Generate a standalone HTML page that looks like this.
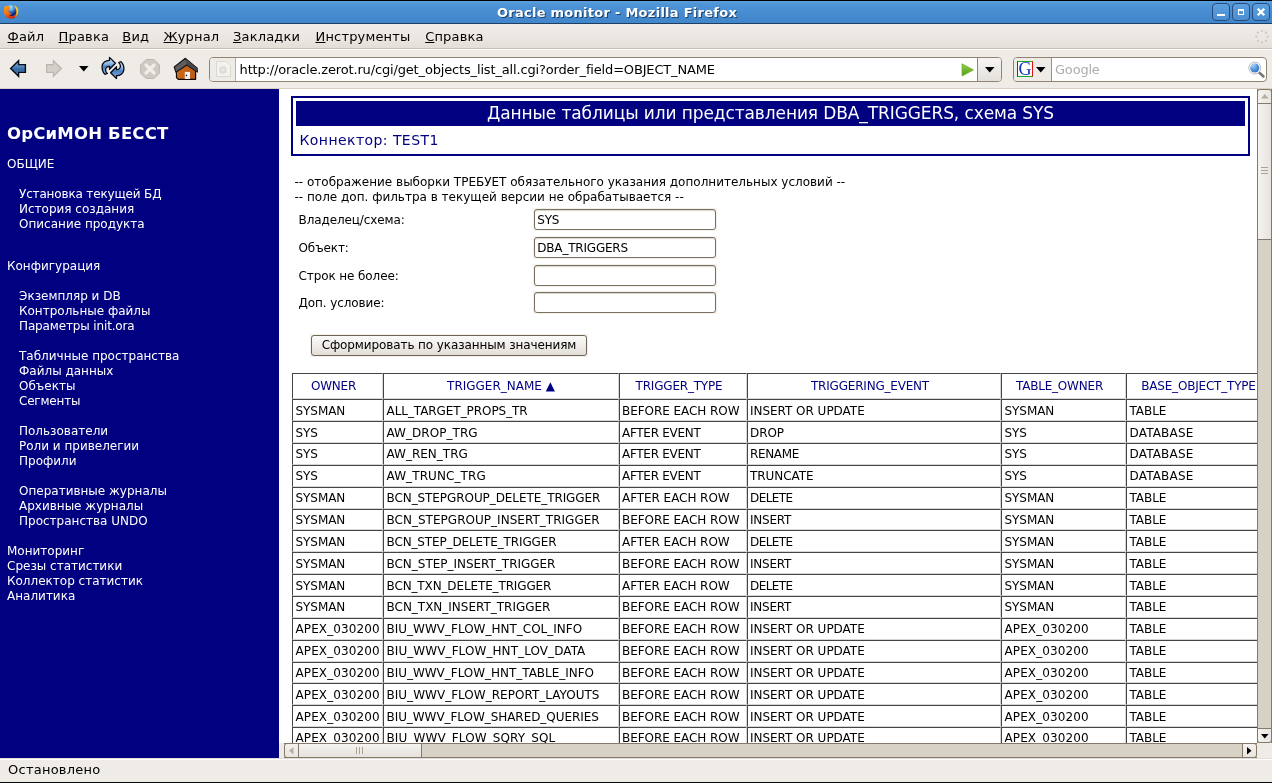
<!DOCTYPE html>
<html lang="ru"><head><meta charset="utf-8"><title>Oracle monitor - Mozilla Firefox</title>
<style>
*{margin:0;padding:0;box-sizing:border-box}
html,body{width:1272px;height:783px;overflow:hidden;background:#efebe7}
body{position:relative;font-family:"DejaVu Sans","Liberation Sans",sans-serif;font-size:12px;color:#000;line-height:15px}
#bg,#tx{position:absolute;left:0;top:0;width:1272px;height:783px;overflow:hidden}
#tx{will-change:transform}
.a{position:absolute;white-space:nowrap}
.m{font-size:13px;line-height:17px}
.mu::first-letter{text-decoration:underline;text-underline-offset:1px}
.w{color:#fff}
.n{color:#000080}
.c{text-align:center}
.clip{position:absolute;left:279px;top:89px;width:978px;height:654px;overflow:hidden}
.clip .a{margin-left:-279px;margin-top:-89px}
</style></head>
<body>
<div id="bg">
<div class="a" style="left:0px;top:0px;width:1272px;height:24px;background:linear-gradient(#5c9fde 0,#4f94d6 15%,#468bcf 60%,#4186cb 100%);border-top:1px solid #000;border-bottom:1px solid #1f3e63"></div>
<svg class="a" style="left:0;top:0" width="24" height="24" viewBox="0 0 24 24">
<defs><radialGradient id="fg" cx="42%" cy="25%" r="75%"><stop offset="0" stop-color="#b5e4fa"/><stop offset=".35" stop-color="#5aa6e6"/><stop offset=".7" stop-color="#1a3f9c"/><stop offset="1" stop-color="#071a5c"/></radialGradient>
<linearGradient id="fx" x1="0.2" y1="0" x2="0.6" y2="1"><stop offset="0" stop-color="#f79a1c"/><stop offset=".55" stop-color="#ee6f10"/><stop offset="1" stop-color="#d6190a"/></linearGradient>
<linearGradient id="fy" x1="0" y1="0" x2="0" y2="1"><stop offset="0" stop-color="#fbd015"/><stop offset=".6" stop-color="#fdc70f"/><stop offset="1" stop-color="#f08a12"/></linearGradient></defs>
<circle cx="11.300" cy="10.300" r="5.900" fill="url(#fg)"/>
<path d="M4.600 6.300C6 5.800 8 5.500 9.600 6.600L10.300 8.500C9 9.500 8.200 10.500 8.600 11.800 9.500 13.500 11 13.600 12 13 11.500 14.800 9.800 15.300 8.800 14.800 10.500 16.800 13.500 16.600 15.200 15 16.800 13.500 17.200 11 16.600 9 17.800 10.500 18.600 13 17.200 15.400 15.500 18.300 11.500 19.400 8.300 18 4.800 16.400 3.200 12.500 3.900 9 4 8 4.200 7 4.600 6.300Z" fill="url(#fx)"/>
<path d="M13.600 5.400C16 5.200 18 7.500 18.300 10 18.600 13 17.600 16 14.800 17.400 16.600 15.200 16.900 12 16 9.500 15.500 8 14.600 6.400 13.600 5.400Z" fill="url(#fy)"/>
</svg>
<div class="a" style="left:1212px;top:3px;width:18px;height:18px;border:1px solid #274b7a;border-radius:4px;background:linear-gradient(#5ea1e1,#4a8dd1)"><div class="a" style="left:4px;top:10px;width:8px;height:2px;background:#fff"></div></div>
<div class="a" style="left:1232px;top:3px;width:18px;height:18px;border:1px solid #274b7a;border-radius:4px;background:linear-gradient(#5ea1e1,#4a8dd1)"><div class="a" style="left:5px;top:5px;width:6px;height:6px;border:1px solid #fff;border-top-width:2px"></div></div>
<div class="a" style="left:1252px;top:3px;width:18px;height:18px;border:1px solid #274b7a;border-radius:4px;background:linear-gradient(#5ea1e1,#4a8dd1)"><svg class="a" style="left:3px;top:3px" width="10" height="10" viewBox="0 0 10 10"><path d="M1.700 1.700L8.300 8.300M8.300 1.700L1.700 8.300" stroke="#fff" stroke-width="2.300"/></svg></div>
<div class="a" style="left:0px;top:24px;width:1272px;height:26px;background:linear-gradient(#efebe7,#ebe6e1 60%,#e2ddd6);border-bottom:1px solid #fff"></div>
<div class="a" style="left:0px;top:48px;width:1272px;height:1px;background:#c9c1b6"></div>
<svg class="a" style="left:1253px;top:28px" width="18" height="18" viewBox="0 0 18 18"><circle cx="14.70" cy="8.70" r="1.100" fill="#cbc6bf"/><circle cx="13.03" cy="12.73" r="1.100" fill="#cbc6bf"/><circle cx="9.00" cy="14.40" r="1.100" fill="#cbc6bf"/><circle cx="4.97" cy="12.73" r="1.100" fill="#cbc6bf"/><circle cx="3.30" cy="8.70" r="1.100" fill="#cbc6bf"/><circle cx="4.97" cy="4.67" r="1.100" fill="#cbc6bf"/><circle cx="9.00" cy="3.00" r="1.100" fill="#cbc6bf"/><circle cx="13.03" cy="4.67" r="1.100" fill="#cbc6bf"/></svg>
<div class="a" style="left:0px;top:50px;width:1272px;height:39px;background:#efebe7;border-bottom:1px solid #d8cfc2"></div>
<svg class="a" style="left:0;top:50px" width="70" height="38" viewBox="0 50 70 38">
<defs><linearGradient id="ba" x1="0" y1="0" x2="0" y2="1"><stop offset="0" stop-color="#9dbde0"/><stop offset=".42" stop-color="#4d80b8"/><stop offset=".55" stop-color="#3567a0"/><stop offset="1" stop-color="#5f8fc4"/></linearGradient></defs>
<path d="M10.600 68.500L18.600 60.700V64.600H25.400V72.400H18.600V76.300Z" fill="url(#ba)" stroke="#070d18" stroke-width="1.400"/>
<path d="M61.400 68.500L53.400 60.700V64.600H46.600V72.400H53.400V76.300Z" fill="#d3d0cb" stroke="#b9b5af" stroke-width="1.200"/>
</svg>
<svg class="a" style="left:79px;top:66px" width="10" height="6" viewBox="0 0 10 6"><path d="M0 0H9.500L4.750 5.500Z" fill="#000"/></svg>
<svg class="a" style="left:98px;top:54px" width="32" height="28" viewBox="0 0 32 28">
<defs><linearGradient id="rl" x1="0" y1="0" x2="0" y2="1"><stop offset="0" stop-color="#e4eefa"/><stop offset=".4" stop-color="#86b1e2"/><stop offset=".55" stop-color="#4a80c0"/><stop offset="1" stop-color="#8cb6e3"/></linearGradient><linearGradient id="rl2" x1="0" y1="1" x2="0" y2="0"><stop offset="0" stop-color="#e4eefa"/><stop offset=".4" stop-color="#86b1e2"/><stop offset=".55" stop-color="#4a80c0"/><stop offset="1" stop-color="#8cb6e3"/></linearGradient></defs>
<path d="M11.500 3.400L17.400 9.300 11.500 15.300V12.300C9 12.300 7.500 14 7.600 16 7.700 17.500 8.500 18.800 9.300 19.500L7 20.300C5 18.500 4 15.500 4.100 12.500 4.200 9 7.500 6.300 11.500 6.300Z" fill="url(#rl)" stroke="#050a14" stroke-width="1.300" stroke-linejoin="round"/>
<path d="M11.500 3.400L17.400 9.300 11.500 15.300V12.300C9 12.300 7.500 14 7.600 16 7.700 17.500 8.500 18.800 9.300 19.500L7 20.300C5 18.500 4 15.500 4.100 12.500 4.200 9 7.500 6.300 11.500 6.300Z" fill="url(#rl2)" stroke="#050a14" stroke-width="1.300" stroke-linejoin="round" transform="rotate(180 15 14)"/>
</svg>
<svg class="a" style="left:139px;top:58px" width="22" height="22" viewBox="0 0 22 22">
<path d="M7 1.500H15L20.500 7V15L15 20.500H7L1.500 15V7Z" fill="#cdc9c3" stroke="#bdb8b1" stroke-width="1"/>
<path d="M7 7L15 15M15 7L7 15" stroke="#f1eeea" stroke-width="3.200" stroke-linecap="round"/></svg>
<svg class="a" style="left:170px;top:54px" width="32" height="28" viewBox="0 0 32 28">
<defs><linearGradient id="hw" x1="0" y1="0" x2="1" y2="0"><stop offset="0" stop-color="#f28c1e"/><stop offset=".12" stop-color="#c9661a"/><stop offset="1" stop-color="#b85c18"/></linearGradient></defs>
<path d="M6.500 15L16.500 9.500 25.600 15.500V25.300H8.300L6.500 23.500Z" fill="url(#hw)" stroke="#0a0502" stroke-width="1.200" stroke-linejoin="round"/>
<path d="M15.400 4.300L27.200 14.200 27.400 18 16.800 11 5.900 18.200 4.200 13Z" fill="#5e5e5e" stroke="#141414" stroke-width="1.100" stroke-linejoin="round"/>
<path d="M15.400 4.800L26.800 14.400 27 17.300 16.800 10.500Z" fill="#474747"/>
<rect x="14.800" y="17.900" width="5.200" height="7" fill="#f3f3f6"/><rect x="15.800" y="20.700" width="1.300" height="1.500" fill="#111"/>
</svg>
<div class="a" style="left:209px;top:57px;width:793px;height:25px;background:#fff;border:1px solid #8f8371;border-radius:4px;overflow:hidden"><div class="a" style="left:0;top:0;width:26px;height:23px;background:#efebe7;border-right:1px solid #b9b0a2"></div><svg class="a" style="left:6px;top:3px" width="15" height="17" viewBox="0 0 15 17"><path d="M.500 .500H10.500L14.500 4.500V15.500H.500Z" fill="#f4f2ef" stroke="#dcd8d2"/><circle cx="7" cy="9" r="3.800" fill="#dedbd6"/><circle cx="7" cy="9" r="1.800" fill="#ebe8e4"/></svg><svg class="a" style="left:751px;top:5px" width="14" height="15" viewBox="0 0 14 15"><defs><linearGradient id="go" x1="0" y1="0" x2="0" y2="1"><stop offset="0" stop-color="#9ad24a"/><stop offset="1" stop-color="#4f9a12"/></linearGradient></defs><path d="M1 .800L12.500 6.900 1 13Z" fill="url(#go)" stroke="#6fb52b" stroke-width=".8" stroke-linejoin="round"/></svg><div class="a" style="left:767px;top:0;width:25px;height:23px;background:linear-gradient(#f7f5f3,#e4e0da);border-left:1px solid #8f8371"></div><svg class="a" style="left:775px;top:9px" width="10" height="6" viewBox="0 0 10 6"><path d="M0 0H9.500L4.750 5.500Z" fill="#000"/></svg></div>
<div class="a" style="left:1013px;top:57px;width:254px;height:25px;background:#fff;border:1px solid #8f8371;border-radius:4px;overflow:hidden"><div class="a" style="left:0;top:0;width:38px;height:23px;background:#efebe7;border-right:1px solid #9c907f"></div><div class="a" style="left:3px;top:3px;width:16px;height:16px;background:#fff;border:1px solid;border-color:#1fa81f #d11 #1fa81f #1238d6"></div><svg class="a" style="left:22px;top:9px" width="10" height="6" viewBox="0 0 10 6"><path d="M0 0H9.500L4.750 5.500Z" fill="#000"/></svg><svg class="a" style="left:233px;top:1.500px" width="20" height="20" viewBox="0 0 20 20"><defs><radialGradient id="ln" cx="35%" cy="30%" r="75%"><stop offset="0" stop-color="#9dc8f2"/><stop offset=".6" stop-color="#4d8fd6"/><stop offset="1" stop-color="#3576c4"/></radialGradient></defs><line x1="11" y1="11.500" x2="16.500" y2="16.500" stroke="#777" stroke-width="2.600" stroke-linecap="round"/><circle cx="7.800" cy="8" r="6" fill="#fff" stroke="#aaa" stroke-width=".8"/><circle cx="7.800" cy="8" r="4.600" fill="url(#ln)"/><path d="M4.500 7A3.500 3.500 0 0 1 9 4.200" stroke="#a9cdf2" stroke-width="1.200" fill="none"/></svg></div>
<div class="a" style="left:0px;top:89px;width:279px;height:669px;background:#000080"></div>
<div class="a" style="left:279px;top:89px;width:978px;height:654px;background:#fff"></div>
<div class="a" style="left:291px;top:96px;width:959px;height:60px;border:2px solid #000080"></div>
<div class="a" style="left:296px;top:101px;width:949px;height:25px;background:#000080"></div>
<div class="a" style="left:533px;top:208px;width:184px;height:23px;background:#f3f1ee"></div>
<div class="a" style="left:534px;top:209px;width:182px;height:21px;border:1px solid #7c715f;border-radius:3px;background:#fff;box-shadow:inset 0 1px 1px #d9d5cf"></div>
<div class="a" style="left:533px;top:236px;width:184px;height:23px;background:#f3f1ee"></div>
<div class="a" style="left:534px;top:237px;width:182px;height:21px;border:1px solid #7c715f;border-radius:3px;background:#fff;box-shadow:inset 0 1px 1px #d9d5cf"></div>
<div class="a" style="left:533px;top:264px;width:184px;height:23px;background:#f3f1ee"></div>
<div class="a" style="left:534px;top:265px;width:182px;height:21px;border:1px solid #7c715f;border-radius:3px;background:#fff;box-shadow:inset 0 1px 1px #d9d5cf"></div>
<div class="a" style="left:533px;top:291px;width:184px;height:23px;background:#f3f1ee"></div>
<div class="a" style="left:534px;top:292px;width:182px;height:21px;border:1px solid #7c715f;border-radius:3px;background:#fff;box-shadow:inset 0 1px 1px #d9d5cf"></div>
<div class="a" style="left:310px;top:334px;width:278px;height:23px;background:#f3f1ee"></div>
<div class="a" style="left:311px;top:335px;width:276px;height:21px;border:1px solid #6f6555;border-radius:3px;background:linear-gradient(#fbfaf9,#efebe7 55%,#e2ddd6)"></div>
<div class="a" style="left:279px;top:89px;width:978px;height:654px;overflow:hidden"><div class="a" style="left:13px;top:284px;width:91px;height:26px;border:1px solid;border-color:#444 #d6d6d6 #d6d6d6 #444"></div><div class="a" style="left:104px;top:284px;width:236px;height:26px;border:1px solid;border-color:#444 #d6d6d6 #d6d6d6 #444"></div><div class="a" style="left:340px;top:284px;width:128px;height:26px;border:1px solid;border-color:#444 #d6d6d6 #d6d6d6 #444"></div><div class="a" style="left:468px;top:284px;width:254px;height:26px;border:1px solid;border-color:#444 #d6d6d6 #d6d6d6 #444"></div><div class="a" style="left:722px;top:284px;width:125px;height:26px;border:1px solid;border-color:#444 #d6d6d6 #d6d6d6 #444"></div><div class="a" style="left:847px;top:284px;width:153px;height:26px;border:1px solid;border-color:#444 #d6d6d6 #d6d6d6 #444"></div><div class="a" style="left:13px;top:310px;width:91px;height:22px;border:1px solid;border-color:#444 #d6d6d6 #d6d6d6 #444"></div><div class="a" style="left:104px;top:310px;width:236px;height:22px;border:1px solid;border-color:#444 #d6d6d6 #d6d6d6 #444"></div><div class="a" style="left:340px;top:310px;width:128px;height:22px;border:1px solid;border-color:#444 #d6d6d6 #d6d6d6 #444"></div><div class="a" style="left:468px;top:310px;width:254px;height:22px;border:1px solid;border-color:#444 #d6d6d6 #d6d6d6 #444"></div><div class="a" style="left:722px;top:310px;width:125px;height:22px;border:1px solid;border-color:#444 #d6d6d6 #d6d6d6 #444"></div><div class="a" style="left:847px;top:310px;width:153px;height:22px;border:1px solid;border-color:#444 #d6d6d6 #d6d6d6 #444"></div><div class="a" style="left:13px;top:332px;width:91px;height:22px;border:1px solid;border-color:#444 #d6d6d6 #d6d6d6 #444"></div><div class="a" style="left:104px;top:332px;width:236px;height:22px;border:1px solid;border-color:#444 #d6d6d6 #d6d6d6 #444"></div><div class="a" style="left:340px;top:332px;width:128px;height:22px;border:1px solid;border-color:#444 #d6d6d6 #d6d6d6 #444"></div><div class="a" style="left:468px;top:332px;width:254px;height:22px;border:1px solid;border-color:#444 #d6d6d6 #d6d6d6 #444"></div><div class="a" style="left:722px;top:332px;width:125px;height:22px;border:1px solid;border-color:#444 #d6d6d6 #d6d6d6 #444"></div><div class="a" style="left:847px;top:332px;width:153px;height:22px;border:1px solid;border-color:#444 #d6d6d6 #d6d6d6 #444"></div><div class="a" style="left:13px;top:354px;width:91px;height:22px;border:1px solid;border-color:#444 #d6d6d6 #d6d6d6 #444"></div><div class="a" style="left:104px;top:354px;width:236px;height:22px;border:1px solid;border-color:#444 #d6d6d6 #d6d6d6 #444"></div><div class="a" style="left:340px;top:354px;width:128px;height:22px;border:1px solid;border-color:#444 #d6d6d6 #d6d6d6 #444"></div><div class="a" style="left:468px;top:354px;width:254px;height:22px;border:1px solid;border-color:#444 #d6d6d6 #d6d6d6 #444"></div><div class="a" style="left:722px;top:354px;width:125px;height:22px;border:1px solid;border-color:#444 #d6d6d6 #d6d6d6 #444"></div><div class="a" style="left:847px;top:354px;width:153px;height:22px;border:1px solid;border-color:#444 #d6d6d6 #d6d6d6 #444"></div><div class="a" style="left:13px;top:376px;width:91px;height:22px;border:1px solid;border-color:#444 #d6d6d6 #d6d6d6 #444"></div><div class="a" style="left:104px;top:376px;width:236px;height:22px;border:1px solid;border-color:#444 #d6d6d6 #d6d6d6 #444"></div><div class="a" style="left:340px;top:376px;width:128px;height:22px;border:1px solid;border-color:#444 #d6d6d6 #d6d6d6 #444"></div><div class="a" style="left:468px;top:376px;width:254px;height:22px;border:1px solid;border-color:#444 #d6d6d6 #d6d6d6 #444"></div><div class="a" style="left:722px;top:376px;width:125px;height:22px;border:1px solid;border-color:#444 #d6d6d6 #d6d6d6 #444"></div><div class="a" style="left:847px;top:376px;width:153px;height:22px;border:1px solid;border-color:#444 #d6d6d6 #d6d6d6 #444"></div><div class="a" style="left:13px;top:398px;width:91px;height:22px;border:1px solid;border-color:#444 #d6d6d6 #d6d6d6 #444"></div><div class="a" style="left:104px;top:398px;width:236px;height:22px;border:1px solid;border-color:#444 #d6d6d6 #d6d6d6 #444"></div><div class="a" style="left:340px;top:398px;width:128px;height:22px;border:1px solid;border-color:#444 #d6d6d6 #d6d6d6 #444"></div><div class="a" style="left:468px;top:398px;width:254px;height:22px;border:1px solid;border-color:#444 #d6d6d6 #d6d6d6 #444"></div><div class="a" style="left:722px;top:398px;width:125px;height:22px;border:1px solid;border-color:#444 #d6d6d6 #d6d6d6 #444"></div><div class="a" style="left:847px;top:398px;width:153px;height:22px;border:1px solid;border-color:#444 #d6d6d6 #d6d6d6 #444"></div><div class="a" style="left:13px;top:420px;width:91px;height:21px;border:1px solid;border-color:#444 #d6d6d6 #d6d6d6 #444"></div><div class="a" style="left:104px;top:420px;width:236px;height:21px;border:1px solid;border-color:#444 #d6d6d6 #d6d6d6 #444"></div><div class="a" style="left:340px;top:420px;width:128px;height:21px;border:1px solid;border-color:#444 #d6d6d6 #d6d6d6 #444"></div><div class="a" style="left:468px;top:420px;width:254px;height:21px;border:1px solid;border-color:#444 #d6d6d6 #d6d6d6 #444"></div><div class="a" style="left:722px;top:420px;width:125px;height:21px;border:1px solid;border-color:#444 #d6d6d6 #d6d6d6 #444"></div><div class="a" style="left:847px;top:420px;width:153px;height:21px;border:1px solid;border-color:#444 #d6d6d6 #d6d6d6 #444"></div><div class="a" style="left:13px;top:441px;width:91px;height:22px;border:1px solid;border-color:#444 #d6d6d6 #d6d6d6 #444"></div><div class="a" style="left:104px;top:441px;width:236px;height:22px;border:1px solid;border-color:#444 #d6d6d6 #d6d6d6 #444"></div><div class="a" style="left:340px;top:441px;width:128px;height:22px;border:1px solid;border-color:#444 #d6d6d6 #d6d6d6 #444"></div><div class="a" style="left:468px;top:441px;width:254px;height:22px;border:1px solid;border-color:#444 #d6d6d6 #d6d6d6 #444"></div><div class="a" style="left:722px;top:441px;width:125px;height:22px;border:1px solid;border-color:#444 #d6d6d6 #d6d6d6 #444"></div><div class="a" style="left:847px;top:441px;width:153px;height:22px;border:1px solid;border-color:#444 #d6d6d6 #d6d6d6 #444"></div><div class="a" style="left:13px;top:463px;width:91px;height:22px;border:1px solid;border-color:#444 #d6d6d6 #d6d6d6 #444"></div><div class="a" style="left:104px;top:463px;width:236px;height:22px;border:1px solid;border-color:#444 #d6d6d6 #d6d6d6 #444"></div><div class="a" style="left:340px;top:463px;width:128px;height:22px;border:1px solid;border-color:#444 #d6d6d6 #d6d6d6 #444"></div><div class="a" style="left:468px;top:463px;width:254px;height:22px;border:1px solid;border-color:#444 #d6d6d6 #d6d6d6 #444"></div><div class="a" style="left:722px;top:463px;width:125px;height:22px;border:1px solid;border-color:#444 #d6d6d6 #d6d6d6 #444"></div><div class="a" style="left:847px;top:463px;width:153px;height:22px;border:1px solid;border-color:#444 #d6d6d6 #d6d6d6 #444"></div><div class="a" style="left:13px;top:485px;width:91px;height:22px;border:1px solid;border-color:#444 #d6d6d6 #d6d6d6 #444"></div><div class="a" style="left:104px;top:485px;width:236px;height:22px;border:1px solid;border-color:#444 #d6d6d6 #d6d6d6 #444"></div><div class="a" style="left:340px;top:485px;width:128px;height:22px;border:1px solid;border-color:#444 #d6d6d6 #d6d6d6 #444"></div><div class="a" style="left:468px;top:485px;width:254px;height:22px;border:1px solid;border-color:#444 #d6d6d6 #d6d6d6 #444"></div><div class="a" style="left:722px;top:485px;width:125px;height:22px;border:1px solid;border-color:#444 #d6d6d6 #d6d6d6 #444"></div><div class="a" style="left:847px;top:485px;width:153px;height:22px;border:1px solid;border-color:#444 #d6d6d6 #d6d6d6 #444"></div><div class="a" style="left:13px;top:507px;width:91px;height:22px;border:1px solid;border-color:#444 #d6d6d6 #d6d6d6 #444"></div><div class="a" style="left:104px;top:507px;width:236px;height:22px;border:1px solid;border-color:#444 #d6d6d6 #d6d6d6 #444"></div><div class="a" style="left:340px;top:507px;width:128px;height:22px;border:1px solid;border-color:#444 #d6d6d6 #d6d6d6 #444"></div><div class="a" style="left:468px;top:507px;width:254px;height:22px;border:1px solid;border-color:#444 #d6d6d6 #d6d6d6 #444"></div><div class="a" style="left:722px;top:507px;width:125px;height:22px;border:1px solid;border-color:#444 #d6d6d6 #d6d6d6 #444"></div><div class="a" style="left:847px;top:507px;width:153px;height:22px;border:1px solid;border-color:#444 #d6d6d6 #d6d6d6 #444"></div><div class="a" style="left:13px;top:529px;width:91px;height:22px;border:1px solid;border-color:#444 #d6d6d6 #d6d6d6 #444"></div><div class="a" style="left:104px;top:529px;width:236px;height:22px;border:1px solid;border-color:#444 #d6d6d6 #d6d6d6 #444"></div><div class="a" style="left:340px;top:529px;width:128px;height:22px;border:1px solid;border-color:#444 #d6d6d6 #d6d6d6 #444"></div><div class="a" style="left:468px;top:529px;width:254px;height:22px;border:1px solid;border-color:#444 #d6d6d6 #d6d6d6 #444"></div><div class="a" style="left:722px;top:529px;width:125px;height:22px;border:1px solid;border-color:#444 #d6d6d6 #d6d6d6 #444"></div><div class="a" style="left:847px;top:529px;width:153px;height:22px;border:1px solid;border-color:#444 #d6d6d6 #d6d6d6 #444"></div><div class="a" style="left:13px;top:551px;width:91px;height:22px;border:1px solid;border-color:#444 #d6d6d6 #d6d6d6 #444"></div><div class="a" style="left:104px;top:551px;width:236px;height:22px;border:1px solid;border-color:#444 #d6d6d6 #d6d6d6 #444"></div><div class="a" style="left:340px;top:551px;width:128px;height:22px;border:1px solid;border-color:#444 #d6d6d6 #d6d6d6 #444"></div><div class="a" style="left:468px;top:551px;width:254px;height:22px;border:1px solid;border-color:#444 #d6d6d6 #d6d6d6 #444"></div><div class="a" style="left:722px;top:551px;width:125px;height:22px;border:1px solid;border-color:#444 #d6d6d6 #d6d6d6 #444"></div><div class="a" style="left:847px;top:551px;width:153px;height:22px;border:1px solid;border-color:#444 #d6d6d6 #d6d6d6 #444"></div><div class="a" style="left:13px;top:573px;width:91px;height:21px;border:1px solid;border-color:#444 #d6d6d6 #d6d6d6 #444"></div><div class="a" style="left:104px;top:573px;width:236px;height:21px;border:1px solid;border-color:#444 #d6d6d6 #d6d6d6 #444"></div><div class="a" style="left:340px;top:573px;width:128px;height:21px;border:1px solid;border-color:#444 #d6d6d6 #d6d6d6 #444"></div><div class="a" style="left:468px;top:573px;width:254px;height:21px;border:1px solid;border-color:#444 #d6d6d6 #d6d6d6 #444"></div><div class="a" style="left:722px;top:573px;width:125px;height:21px;border:1px solid;border-color:#444 #d6d6d6 #d6d6d6 #444"></div><div class="a" style="left:847px;top:573px;width:153px;height:21px;border:1px solid;border-color:#444 #d6d6d6 #d6d6d6 #444"></div><div class="a" style="left:13px;top:594px;width:91px;height:22px;border:1px solid;border-color:#444 #d6d6d6 #d6d6d6 #444"></div><div class="a" style="left:104px;top:594px;width:236px;height:22px;border:1px solid;border-color:#444 #d6d6d6 #d6d6d6 #444"></div><div class="a" style="left:340px;top:594px;width:128px;height:22px;border:1px solid;border-color:#444 #d6d6d6 #d6d6d6 #444"></div><div class="a" style="left:468px;top:594px;width:254px;height:22px;border:1px solid;border-color:#444 #d6d6d6 #d6d6d6 #444"></div><div class="a" style="left:722px;top:594px;width:125px;height:22px;border:1px solid;border-color:#444 #d6d6d6 #d6d6d6 #444"></div><div class="a" style="left:847px;top:594px;width:153px;height:22px;border:1px solid;border-color:#444 #d6d6d6 #d6d6d6 #444"></div><div class="a" style="left:13px;top:616px;width:91px;height:22px;border:1px solid;border-color:#444 #d6d6d6 #d6d6d6 #444"></div><div class="a" style="left:104px;top:616px;width:236px;height:22px;border:1px solid;border-color:#444 #d6d6d6 #d6d6d6 #444"></div><div class="a" style="left:340px;top:616px;width:128px;height:22px;border:1px solid;border-color:#444 #d6d6d6 #d6d6d6 #444"></div><div class="a" style="left:468px;top:616px;width:254px;height:22px;border:1px solid;border-color:#444 #d6d6d6 #d6d6d6 #444"></div><div class="a" style="left:722px;top:616px;width:125px;height:22px;border:1px solid;border-color:#444 #d6d6d6 #d6d6d6 #444"></div><div class="a" style="left:847px;top:616px;width:153px;height:22px;border:1px solid;border-color:#444 #d6d6d6 #d6d6d6 #444"></div><div class="a" style="left:13px;top:638px;width:91px;height:22px;border:1px solid;border-color:#444 #d6d6d6 #d6d6d6 #444"></div><div class="a" style="left:104px;top:638px;width:236px;height:22px;border:1px solid;border-color:#444 #d6d6d6 #d6d6d6 #444"></div><div class="a" style="left:340px;top:638px;width:128px;height:22px;border:1px solid;border-color:#444 #d6d6d6 #d6d6d6 #444"></div><div class="a" style="left:468px;top:638px;width:254px;height:22px;border:1px solid;border-color:#444 #d6d6d6 #d6d6d6 #444"></div><div class="a" style="left:722px;top:638px;width:125px;height:22px;border:1px solid;border-color:#444 #d6d6d6 #d6d6d6 #444"></div><div class="a" style="left:847px;top:638px;width:153px;height:22px;border:1px solid;border-color:#444 #d6d6d6 #d6d6d6 #444"></div></div>
<div class="a" style="left:1257px;top:89px;width:15px;height:654px;background:#d8d1c6;border-left:1px solid #85796a;border-right:1px solid #85796a"></div>
<div class="a" style="left:1257px;top:89px;width:15px;height:15px;background:linear-gradient(90deg,#f4f2ef,#e9e5e0);border:1px solid #85796a;border-radius:3px 3px 0 0"></div>
<svg class="a" style="left:1261px;top:94px" width="8" height="5" viewBox="0 0 8 5"><path d="M0 4.500L3.750 0 7.500 4.500Z" fill="#b3aea6"/></svg>
<div class="a" style="left:1257px;top:103px;width:15px;height:137px;background:linear-gradient(90deg,#f6f4f1,#e6e2dc);border:1px solid #85796a"></div>
<div class="a" style="left:1261px;top:167px;width:7px;height:1px;background:#a9a195"></div>
<div class="a" style="left:1261px;top:170px;width:7px;height:1px;background:#a9a195"></div>
<div class="a" style="left:1261px;top:173px;width:7px;height:1px;background:#a9a195"></div>
<div class="a" style="left:1257px;top:728px;width:15px;height:15px;background:linear-gradient(90deg,#f4f2ef,#e9e5e0);border:1px solid #85796a;border-radius:0 0 3px 3px"></div>
<svg class="a" style="left:1261px;top:734px" width="8" height="5" viewBox="0 0 8 5"><path d="M0 0H7.500L3.750 4.500Z" fill="#000"/></svg>
<div class="a" style="left:284px;top:743px;width:973px;height:15px;background:#d8d1c6;border-top:1px solid #85796a;border-bottom:1px solid #85796a"></div>
<div class="a" style="left:284px;top:743px;width:15px;height:15px;background:linear-gradient(#f4f2ef,#e9e5e0);border:1px solid #85796a;border-radius:3px 0 0 3px"></div>
<svg class="a" style="left:289px;top:747px" width="5" height="8" viewBox="0 0 5 8"><path d="M4.500 0V7.500L0 3.750Z" fill="#b3aea6"/></svg>
<div class="a" style="left:298px;top:743px;width:124px;height:15px;background:linear-gradient(#f6f4f1,#e6e2dc);border:1px solid #85796a"></div>
<div class="a" style="left:356px;top:747px;width:1px;height:7px;background:#a9a195"></div>
<div class="a" style="left:359px;top:747px;width:1px;height:7px;background:#a9a195"></div>
<div class="a" style="left:362px;top:747px;width:1px;height:7px;background:#a9a195"></div>
<div class="a" style="left:1242px;top:743px;width:15px;height:15px;background:linear-gradient(#f4f2ef,#e9e5e0);border:1px solid #85796a;border-radius:0 3px 3px 0"></div>
<svg class="a" style="left:1247px;top:747px" width="5" height="8" viewBox="0 0 5 8"><path d="M0 0L4.500 3.750 0 7.500Z" fill="#000"/></svg>
<div class="a" style="left:1257px;top:743px;width:15px;height:15px;background:#efebe7"></div>
<div class="a" style="left:0px;top:758px;width:1272px;height:25px;background:#efebe7;border-top:1px solid #e2ded7;box-shadow:inset 0 1px 0 #fff;border-bottom:1px solid #05080c"></div>
</div>
<div id="tx">
<div class="a c w" style="left:0px;width:1234px;top:4px;font-weight:bold;font-size:13px;line-height:17px;text-shadow:1px 1px 0 #1d3f66;letter-spacing:.27px">Oracle monitor - Mozilla Firefox</div>
<div class="a m mu" style="left:7.5px;top:28px;letter-spacing:.17px">Файл</div>
<div class="a m mu" style="left:58.6px;top:28px;letter-spacing:.17px">Правка</div>
<div class="a m mu" style="left:122.3px;top:28px;letter-spacing:.17px">Вид</div>
<div class="a m mu" style="left:163.5px;top:28px;letter-spacing:.17px">Журнал</div>
<div class="a m mu" style="left:233px;top:28px;letter-spacing:.17px">Закладки</div>
<div class="a m mu" style="left:315.5px;top:28px;letter-spacing:.17px">Инструменты</div>
<div class="a m mu" style="left:425.2px;top:28px;letter-spacing:.17px">Справка</div>
<div class="a m" style="left:239.6px;top:61px;letter-spacing:-.16px">http://oracle.zerot.ru/cgi/get_objects_list_all.cgi?order_field=OBJECT_NAME</div>
<div class="a c" style="left:1017px;width:16px;top:60px;font-family:'Liberation Serif',serif;font-size:18px;line-height:19px;color:#1535b5">G</div>
<div class="a m" style="left:1055px;top:61px;color:#adadad;letter-spacing:-.2px">Google</div>
<div class="a w" style="left:7px;top:124px;font-size:16.500px;font-weight:bold;line-height:20px;letter-spacing:.2px">ОрСиМОН БЕССТ</div>
<div class="a w" style="left:7px;top:157px;">ОБЩИЕ</div>
<div class="a w" style="left:19px;top:187px;letter-spacing:-0.16px">Установка текущей БД</div>
<div class="a w" style="left:19px;top:202px;">История создания</div>
<div class="a w" style="left:19px;top:217px;">Описание продукта</div>
<div class="a w" style="left:7px;top:259px;">Конфигурация</div>
<div class="a w" style="left:19px;top:289px;">Экземпляр и DB</div>
<div class="a w" style="left:19px;top:304px;">Контрольные файлы</div>
<div class="a w" style="left:19px;top:319px;letter-spacing:-0.14px">Параметры init.ora</div>
<div class="a w" style="left:19px;top:349px;">Табличные пространства</div>
<div class="a w" style="left:19px;top:364px;">Файлы данных</div>
<div class="a w" style="left:19px;top:379px;">Объекты</div>
<div class="a w" style="left:19px;top:394px;letter-spacing:-0.2px">Сегменты</div>
<div class="a w" style="left:19px;top:424px;">Пользователи</div>
<div class="a w" style="left:19px;top:439px;">Роли и привелегии</div>
<div class="a w" style="left:19px;top:454px;">Профили</div>
<div class="a w" style="left:19px;top:484px;">Оперативные журналы</div>
<div class="a w" style="left:19px;top:499px;">Архивные журналы</div>
<div class="a w" style="left:19px;top:514px;">Пространства UNDO</div>
<div class="a w" style="left:7px;top:544px;">Мониторинг</div>
<div class="a w" style="left:7px;top:559px;">Срезы статистики</div>
<div class="a w" style="left:7px;top:574px;">Коллектор статистик</div>
<div class="a w" style="left:7px;top:589px;">Аналитика</div>
<div class="a m" style="left:8px;top:761px;letter-spacing:.25px">Остановлено</div>
<div class="clip">
<div class="a c w" style="left:296px;width:949px;top:101px;font-size:17px;line-height:24px;letter-spacing:-.1px">Данные таблицы или представления DBA_TRIGGERS, схема SYS</div>
<div class="a n" style="left:299.5px;top:130px;font-size:14px;line-height:20px;letter-spacing:.43px">Коннектор: TEST1</div>
<div class="a" style="left:294.5px;top:175px;">-- отображение выборки ТРЕБУЕТ обязательного указания дополнительных условий --</div>
<div class="a" style="left:294.5px;top:190px;">-- поле доп. фильтра в текущей версии не обрабатывается --</div>
<div class="a" style="left:298.5px;top:213px;letter-spacing:-.1px">Владелец/схема:</div>
<div class="a" style="left:537.3px;top:213px;letter-spacing:-.2px">SYS</div>
<div class="a" style="left:298.5px;top:241px;letter-spacing:-.1px">Объект:</div>
<div class="a" style="left:537.3px;top:241px;letter-spacing:-.2px">DBA_TRIGGERS</div>
<div class="a" style="left:298.5px;top:269px;letter-spacing:-.1px">Строк не более:</div>
<div class="a" style="left:298.5px;top:296px;letter-spacing:-.1px">Доп. условие:</div>
<div class="a c" style="left:311px;width:276px;top:338px;letter-spacing:-.1px">Сформировать по указанным значениям</div>
<div class="a c n" style="left:292px;width:83px;top:379px;letter-spacing:-.2px">OWNER</div>
<div class="a c n" style="left:383px;width:236px;top:379px;">TRIGGER_NAME ▲</div>
<div class="a c n" style="left:619px;width:120px;top:379px;letter-spacing:-.2px">TRIGGER_TYPE</div>
<div class="a c n" style="left:747px;width:246px;top:379px;letter-spacing:-.2px">TRIGGERING_EVENT</div>
<div class="a c n" style="left:1001px;width:117px;top:379px;letter-spacing:-.2px">TABLE_OWNER</div>
<div class="a c n" style="left:1126px;width:145px;top:379px;letter-spacing:-.2px">BASE_OBJECT_TYPE</div>
<div class="a" style="left:295.5px;top:404px;letter-spacing:-0.060px">SYSMAN</div>
<div class="a" style="left:386.5px;top:404px;letter-spacing:-0.060px">ALL_TARGET_PROPS_TR</div>
<div class="a" style="left:622px;top:404px;letter-spacing:-0.060px">BEFORE EACH ROW</div>
<div class="a" style="left:750px;top:404px;letter-spacing:-0.030px">INSERT OR UPDATE</div>
<div class="a" style="left:1004.5px;top:404px;letter-spacing:-0.060px">SYSMAN</div>
<div class="a" style="left:1129.5px;top:404px;letter-spacing:-0.060px">TABLE</div>
<div class="a" style="left:295.5px;top:426px;letter-spacing:-0.060px">SYS</div>
<div class="a" style="left:386.5px;top:426px;letter-spacing:0.050px">AW_DROP_TRG</div>
<div class="a" style="left:622px;top:426px;letter-spacing:-0.290px">AFTER EVENT</div>
<div class="a" style="left:750px;top:426px;letter-spacing:-0.060px">DROP</div>
<div class="a" style="left:1004.5px;top:426px;letter-spacing:-0.060px">SYS</div>
<div class="a" style="left:1129.5px;top:426px;letter-spacing:0.170px">DATABASE</div>
<div class="a" style="left:295.5px;top:447px;letter-spacing:-0.060px">SYS</div>
<div class="a" style="left:386.5px;top:447px;letter-spacing:0.000px">AW_REN_TRG</div>
<div class="a" style="left:622px;top:447px;letter-spacing:-0.290px">AFTER EVENT</div>
<div class="a" style="left:750px;top:447px;letter-spacing:-0.360px">RENAME</div>
<div class="a" style="left:1004.5px;top:447px;letter-spacing:-0.060px">SYS</div>
<div class="a" style="left:1129.5px;top:447px;letter-spacing:0.170px">DATABASE</div>
<div class="a" style="left:295.5px;top:469px;letter-spacing:-0.060px">SYS</div>
<div class="a" style="left:386.5px;top:469px;letter-spacing:0.100px">AW_TRUNC_TRG</div>
<div class="a" style="left:622px;top:469px;letter-spacing:-0.290px">AFTER EVENT</div>
<div class="a" style="left:750px;top:469px;letter-spacing:-0.060px">TRUNCATE</div>
<div class="a" style="left:1004.5px;top:469px;letter-spacing:-0.060px">SYS</div>
<div class="a" style="left:1129.5px;top:469px;letter-spacing:0.170px">DATABASE</div>
<div class="a" style="left:295.5px;top:491px;letter-spacing:-0.060px">SYSMAN</div>
<div class="a" style="left:386.5px;top:491px;letter-spacing:-0.077px">BCN_STEPGROUP_DELETE_TRIGGER</div>
<div class="a" style="left:622px;top:491px;letter-spacing:-0.060px">AFTER EACH ROW</div>
<div class="a" style="left:750px;top:491px;letter-spacing:-0.560px">DELETE</div>
<div class="a" style="left:1004.5px;top:491px;letter-spacing:-0.060px">SYSMAN</div>
<div class="a" style="left:1129.5px;top:491px;letter-spacing:-0.060px">TABLE</div>
<div class="a" style="left:295.5px;top:513px;letter-spacing:-0.060px">SYSMAN</div>
<div class="a" style="left:386.5px;top:513px;letter-spacing:0.025px">BCN_STEPGROUP_INSERT_TRIGGER</div>
<div class="a" style="left:622px;top:513px;letter-spacing:-0.060px">BEFORE EACH ROW</div>
<div class="a" style="left:750px;top:513px;letter-spacing:-0.240px">INSERT</div>
<div class="a" style="left:1004.5px;top:513px;letter-spacing:-0.060px">SYSMAN</div>
<div class="a" style="left:1129.5px;top:513px;letter-spacing:-0.060px">TABLE</div>
<div class="a" style="left:295.5px;top:535px;letter-spacing:-0.060px">SYSMAN</div>
<div class="a" style="left:386.5px;top:535px;letter-spacing:-0.130px">BCN_STEP_DELETE_TRIGGER</div>
<div class="a" style="left:622px;top:535px;letter-spacing:-0.060px">AFTER EACH ROW</div>
<div class="a" style="left:750px;top:535px;letter-spacing:-0.560px">DELETE</div>
<div class="a" style="left:1004.5px;top:535px;letter-spacing:-0.060px">SYSMAN</div>
<div class="a" style="left:1129.5px;top:535px;letter-spacing:-0.060px">TABLE</div>
<div class="a" style="left:295.5px;top:557px;letter-spacing:-0.060px">SYSMAN</div>
<div class="a" style="left:386.5px;top:557px;letter-spacing:-0.020px">BCN_STEP_INSERT_TRIGGER</div>
<div class="a" style="left:622px;top:557px;letter-spacing:-0.060px">BEFORE EACH ROW</div>
<div class="a" style="left:750px;top:557px;letter-spacing:-0.240px">INSERT</div>
<div class="a" style="left:1004.5px;top:557px;letter-spacing:-0.060px">SYSMAN</div>
<div class="a" style="left:1129.5px;top:557px;letter-spacing:-0.060px">TABLE</div>
<div class="a" style="left:295.5px;top:579px;letter-spacing:-0.060px">SYSMAN</div>
<div class="a" style="left:386.5px;top:579px;letter-spacing:-0.130px">BCN_TXN_DELETE_TRIGGER</div>
<div class="a" style="left:622px;top:579px;letter-spacing:-0.060px">AFTER EACH ROW</div>
<div class="a" style="left:750px;top:579px;letter-spacing:-0.560px">DELETE</div>
<div class="a" style="left:1004.5px;top:579px;letter-spacing:-0.060px">SYSMAN</div>
<div class="a" style="left:1129.5px;top:579px;letter-spacing:-0.060px">TABLE</div>
<div class="a" style="left:295.5px;top:600px;letter-spacing:-0.060px">SYSMAN</div>
<div class="a" style="left:386.5px;top:600px;letter-spacing:-0.010px">BCN_TXN_INSERT_TRIGGER</div>
<div class="a" style="left:622px;top:600px;letter-spacing:-0.060px">BEFORE EACH ROW</div>
<div class="a" style="left:750px;top:600px;letter-spacing:-0.240px">INSERT</div>
<div class="a" style="left:1004.5px;top:600px;letter-spacing:-0.060px">SYSMAN</div>
<div class="a" style="left:1129.5px;top:600px;letter-spacing:-0.060px">TABLE</div>
<div class="a" style="left:295.5px;top:622px;letter-spacing:0.100px">APEX_030200</div>
<div class="a" style="left:386.5px;top:622px;letter-spacing:0.000px">BIU_WWV_FLOW_HNT_COL_INFO</div>
<div class="a" style="left:622px;top:622px;letter-spacing:-0.060px">BEFORE EACH ROW</div>
<div class="a" style="left:750px;top:622px;letter-spacing:-0.030px">INSERT OR UPDATE</div>
<div class="a" style="left:1004.5px;top:622px;letter-spacing:0.100px">APEX_030200</div>
<div class="a" style="left:1129.5px;top:622px;letter-spacing:-0.060px">TABLE</div>
<div class="a" style="left:295.5px;top:644px;letter-spacing:0.100px">APEX_030200</div>
<div class="a" style="left:386.5px;top:644px;letter-spacing:0.080px">BIU_WWV_FLOW_HNT_LOV_DATA</div>
<div class="a" style="left:622px;top:644px;letter-spacing:-0.060px">BEFORE EACH ROW</div>
<div class="a" style="left:750px;top:644px;letter-spacing:-0.030px">INSERT OR UPDATE</div>
<div class="a" style="left:1004.5px;top:644px;letter-spacing:0.100px">APEX_030200</div>
<div class="a" style="left:1129.5px;top:644px;letter-spacing:-0.060px">TABLE</div>
<div class="a" style="left:295.5px;top:666px;letter-spacing:0.100px">APEX_030200</div>
<div class="a" style="left:386.5px;top:666px;letter-spacing:-0.030px">BIU_WWV_FLOW_HNT_TABLE_INFO</div>
<div class="a" style="left:622px;top:666px;letter-spacing:-0.060px">BEFORE EACH ROW</div>
<div class="a" style="left:750px;top:666px;letter-spacing:-0.030px">INSERT OR UPDATE</div>
<div class="a" style="left:1004.5px;top:666px;letter-spacing:0.100px">APEX_030200</div>
<div class="a" style="left:1129.5px;top:666px;letter-spacing:-0.060px">TABLE</div>
<div class="a" style="left:295.5px;top:688px;letter-spacing:0.100px">APEX_030200</div>
<div class="a" style="left:386.5px;top:688px;letter-spacing:0.020px">BIU_WWV_FLOW_REPORT_LAYOUTS</div>
<div class="a" style="left:622px;top:688px;letter-spacing:-0.060px">BEFORE EACH ROW</div>
<div class="a" style="left:750px;top:688px;letter-spacing:-0.030px">INSERT OR UPDATE</div>
<div class="a" style="left:1004.5px;top:688px;letter-spacing:0.100px">APEX_030200</div>
<div class="a" style="left:1129.5px;top:688px;letter-spacing:-0.060px">TABLE</div>
<div class="a" style="left:295.5px;top:710px;letter-spacing:0.100px">APEX_030200</div>
<div class="a" style="left:386.5px;top:710px;letter-spacing:-0.060px">BIU_WWV_FLOW_SHARED_QUERIES</div>
<div class="a" style="left:622px;top:710px;letter-spacing:-0.060px">BEFORE EACH ROW</div>
<div class="a" style="left:750px;top:710px;letter-spacing:-0.030px">INSERT OR UPDATE</div>
<div class="a" style="left:1004.5px;top:710px;letter-spacing:0.100px">APEX_030200</div>
<div class="a" style="left:1129.5px;top:710px;letter-spacing:-0.060px">TABLE</div>
<div class="a" style="left:295.5px;top:731px;letter-spacing:0.100px">APEX_030200</div>
<div class="a" style="left:386.5px;top:731px;letter-spacing:0.105px">BIU_WWV_FLOW_SQRY_SQL</div>
<div class="a" style="left:622px;top:731px;letter-spacing:-0.060px">BEFORE EACH ROW</div>
<div class="a" style="left:750px;top:731px;letter-spacing:-0.030px">INSERT OR UPDATE</div>
<div class="a" style="left:1004.5px;top:731px;letter-spacing:0.100px">APEX_030200</div>
<div class="a" style="left:1129.5px;top:731px;letter-spacing:-0.060px">TABLE</div>
</div>
</div>
</body></html>
